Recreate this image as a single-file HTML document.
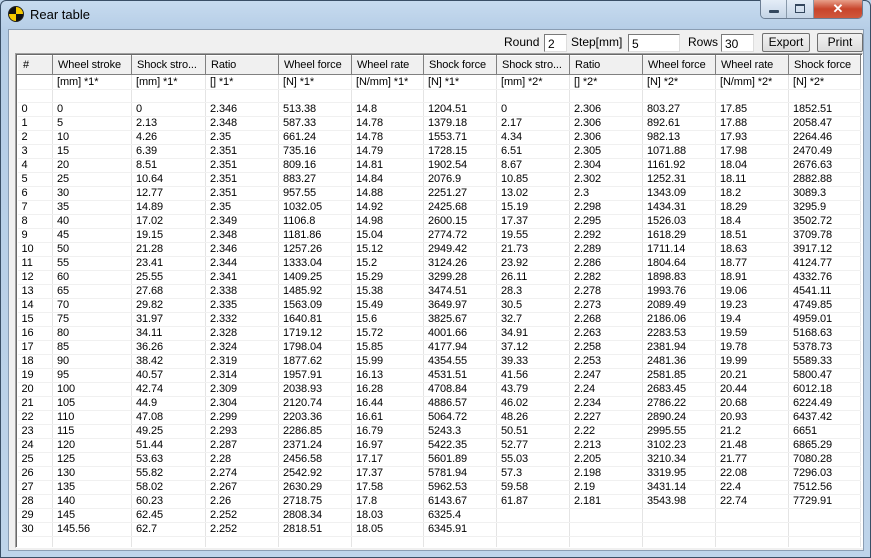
<!DOCTYPE html>
<html><head><meta charset="utf-8"><style>
*{margin:0;padding:0;box-sizing:border-box}
body{width:871px;height:558px;overflow:hidden;position:relative;font-family:"Liberation Sans",sans-serif;font-size:11px;color:#000;background:#bcd3ea}
.frame{position:absolute;left:0;top:0;width:871px;height:558px;border:1px solid #3a4f66;border-radius:6px 6px 0 0;background:linear-gradient(#c7dbef,#b5cde6 30px,#bed4ea)}
.title{position:absolute;left:30px;top:7px;font-size:13px;color:#000}
.icon{position:absolute;left:8px;top:6px;width:16px;height:16px;border-radius:50%;background:conic-gradient(#f5c800 0 90deg,#111 90deg 180deg,#f5c800 180deg 270deg,#111 270deg 360deg);border:1px solid #222}
.btns{position:absolute;left:760px;top:0;height:19px;width:103px;border:1px solid #6b7d93;border-top:none;border-radius:0 0 5px 5px;overflow:hidden;display:flex}
.btns div{height:18px;background:linear-gradient(#e4edf7,#c4d4e6);border-right:1px solid #8899aa;position:relative}
.b1{width:26px}.b2{width:27px}.b3{flex:1;background:linear-gradient(#e8a08a,#c8452b 50%,#d0583c)!important;border:none!important;color:#fff;text-align:center;font-weight:bold;font-size:13px;line-height:17px}
.b1 i{position:absolute;left:8px;top:10px;width:10px;height:3px;background:#33475e;border-radius:1px}
.b2 i{position:absolute;left:8px;top:4px;width:10px;height:9px;border:1px solid #33475e;border-top-width:2px}
.client{position:absolute;left:8px;top:29px;width:856px;height:522px;background:#f0f0f0;border:1px solid #8a9db3}
.lbl{position:absolute;top:35px;font-size:12px}
.inp{position:absolute;top:34px;height:18px;background:#fff;border:1px solid #7a7a7a;border-right-color:#ddd;border-bottom-color:#ddd;font-size:12px;padding:2px 0 0 3px}
.btn{position:absolute;top:33px;height:19px;background:linear-gradient(#f2f2f2,#dcdcdc);border:1px solid #707070;border-radius:2px;font-size:12px;text-align:center;line-height:17px}
.tw{position:absolute;left:15px;top:53px;width:848px;height:495px;border:1px solid #a0a0a0;border-right-color:#fff;border-bottom-color:#fff;background:#fff;overflow:hidden}
.tw2{position:absolute;left:16px;top:54px;width:846px;height:493px;border:1px solid #696969;border-right:none;border-bottom:none;overflow:hidden;background:#fff}
table{border-collapse:collapse;table-layout:fixed;position:absolute;left:0;top:0}
td{height:14px;padding:0 0 0 4px;white-space:nowrap;overflow:hidden;border-right:1px solid #e4e4e4;border-bottom:1px solid #f0f0f0;line-height:13px;font-size:11px;letter-spacing:-0.1px}
tr.h td{height:19px;background:#f0f0f0;border:1px solid #a0a0a0;border-top:1px solid #fff;border-left:1px solid #fff;border-right:1px solid #808080;border-bottom:1px solid #808080;padding-left:5px}
tr.u td{height:15px}
tr.b td{height:13px}
</style></head><body>
<div class="frame"></div>
<div class="icon"></div>
<div class="title">Rear table</div>
<div class="btns"><div class="b1"><i></i></div><div class="b2"><i></i></div><div class="b3">✕</div></div>
<div class="client"></div>
<div class="lbl" style="left:504px">Round</div>
<div class="inp" style="left:544px;width:23px">2</div>
<div class="lbl" style="left:571px">Step[mm]</div>
<div class="inp" style="left:628px;width:52px">5</div>
<div class="lbl" style="left:688px">Rows</div>
<div class="inp" style="left:721px;width:33px">30</div>
<div class="btn" style="left:762px;width:48px">Export</div>
<div class="btn" style="left:817px;width:46px">Print</div>
<div class="tw"></div>
<div class="tw2">
<table>
<colgroup><col style="width:35px"><col style="width:79px"><col style="width:74px"><col style="width:73px"><col style="width:73px"><col style="width:72px"><col style="width:73px"><col style="width:73px"><col style="width:73px"><col style="width:73px"><col style="width:73px"><col style="width:72px"></colgroup>
<tr class="h"><td>#</td><td>Wheel stroke</td><td>Shock stro...</td><td>Ratio</td><td>Wheel force</td><td>Wheel rate</td><td>Shock force</td><td>Shock stro...</td><td>Ratio</td><td>Wheel force</td><td>Wheel rate</td><td>Shock force</td></tr>
<tr class="u"><td></td><td>[mm] *1*</td><td>[mm] *1*</td><td>[] *1*</td><td>[N] *1*</td><td>[N/mm] *1*</td><td>[N] *1*</td><td>[mm] *2*</td><td>[] *2*</td><td>[N] *2*</td><td>[N/mm] *2*</td><td>[N] *2*</td></tr>
<tr class="b"><td></td><td></td><td></td><td></td><td></td><td></td><td></td><td></td><td></td><td></td><td></td><td></td></tr>
<tr><td>0</td><td>0</td><td>0</td><td>2.346</td><td>513.38</td><td>14.8</td><td>1204.51</td><td>0</td><td>2.306</td><td>803.27</td><td>17.85</td><td>1852.51</td></tr>
<tr><td>1</td><td>5</td><td>2.13</td><td>2.348</td><td>587.33</td><td>14.78</td><td>1379.18</td><td>2.17</td><td>2.306</td><td>892.61</td><td>17.88</td><td>2058.47</td></tr>
<tr><td>2</td><td>10</td><td>4.26</td><td>2.35</td><td>661.24</td><td>14.78</td><td>1553.71</td><td>4.34</td><td>2.306</td><td>982.13</td><td>17.93</td><td>2264.46</td></tr>
<tr><td>3</td><td>15</td><td>6.39</td><td>2.351</td><td>735.16</td><td>14.79</td><td>1728.15</td><td>6.51</td><td>2.305</td><td>1071.88</td><td>17.98</td><td>2470.49</td></tr>
<tr><td>4</td><td>20</td><td>8.51</td><td>2.351</td><td>809.16</td><td>14.81</td><td>1902.54</td><td>8.67</td><td>2.304</td><td>1161.92</td><td>18.04</td><td>2676.63</td></tr>
<tr><td>5</td><td>25</td><td>10.64</td><td>2.351</td><td>883.27</td><td>14.84</td><td>2076.9</td><td>10.85</td><td>2.302</td><td>1252.31</td><td>18.11</td><td>2882.88</td></tr>
<tr><td>6</td><td>30</td><td>12.77</td><td>2.351</td><td>957.55</td><td>14.88</td><td>2251.27</td><td>13.02</td><td>2.3</td><td>1343.09</td><td>18.2</td><td>3089.3</td></tr>
<tr><td>7</td><td>35</td><td>14.89</td><td>2.35</td><td>1032.05</td><td>14.92</td><td>2425.68</td><td>15.19</td><td>2.298</td><td>1434.31</td><td>18.29</td><td>3295.9</td></tr>
<tr><td>8</td><td>40</td><td>17.02</td><td>2.349</td><td>1106.8</td><td>14.98</td><td>2600.15</td><td>17.37</td><td>2.295</td><td>1526.03</td><td>18.4</td><td>3502.72</td></tr>
<tr><td>9</td><td>45</td><td>19.15</td><td>2.348</td><td>1181.86</td><td>15.04</td><td>2774.72</td><td>19.55</td><td>2.292</td><td>1618.29</td><td>18.51</td><td>3709.78</td></tr>
<tr><td>10</td><td>50</td><td>21.28</td><td>2.346</td><td>1257.26</td><td>15.12</td><td>2949.42</td><td>21.73</td><td>2.289</td><td>1711.14</td><td>18.63</td><td>3917.12</td></tr>
<tr><td>11</td><td>55</td><td>23.41</td><td>2.344</td><td>1333.04</td><td>15.2</td><td>3124.26</td><td>23.92</td><td>2.286</td><td>1804.64</td><td>18.77</td><td>4124.77</td></tr>
<tr><td>12</td><td>60</td><td>25.55</td><td>2.341</td><td>1409.25</td><td>15.29</td><td>3299.28</td><td>26.11</td><td>2.282</td><td>1898.83</td><td>18.91</td><td>4332.76</td></tr>
<tr><td>13</td><td>65</td><td>27.68</td><td>2.338</td><td>1485.92</td><td>15.38</td><td>3474.51</td><td>28.3</td><td>2.278</td><td>1993.76</td><td>19.06</td><td>4541.11</td></tr>
<tr><td>14</td><td>70</td><td>29.82</td><td>2.335</td><td>1563.09</td><td>15.49</td><td>3649.97</td><td>30.5</td><td>2.273</td><td>2089.49</td><td>19.23</td><td>4749.85</td></tr>
<tr><td>15</td><td>75</td><td>31.97</td><td>2.332</td><td>1640.81</td><td>15.6</td><td>3825.67</td><td>32.7</td><td>2.268</td><td>2186.06</td><td>19.4</td><td>4959.01</td></tr>
<tr><td>16</td><td>80</td><td>34.11</td><td>2.328</td><td>1719.12</td><td>15.72</td><td>4001.66</td><td>34.91</td><td>2.263</td><td>2283.53</td><td>19.59</td><td>5168.63</td></tr>
<tr><td>17</td><td>85</td><td>36.26</td><td>2.324</td><td>1798.04</td><td>15.85</td><td>4177.94</td><td>37.12</td><td>2.258</td><td>2381.94</td><td>19.78</td><td>5378.73</td></tr>
<tr><td>18</td><td>90</td><td>38.42</td><td>2.319</td><td>1877.62</td><td>15.99</td><td>4354.55</td><td>39.33</td><td>2.253</td><td>2481.36</td><td>19.99</td><td>5589.33</td></tr>
<tr><td>19</td><td>95</td><td>40.57</td><td>2.314</td><td>1957.91</td><td>16.13</td><td>4531.51</td><td>41.56</td><td>2.247</td><td>2581.85</td><td>20.21</td><td>5800.47</td></tr>
<tr><td>20</td><td>100</td><td>42.74</td><td>2.309</td><td>2038.93</td><td>16.28</td><td>4708.84</td><td>43.79</td><td>2.24</td><td>2683.45</td><td>20.44</td><td>6012.18</td></tr>
<tr><td>21</td><td>105</td><td>44.9</td><td>2.304</td><td>2120.74</td><td>16.44</td><td>4886.57</td><td>46.02</td><td>2.234</td><td>2786.22</td><td>20.68</td><td>6224.49</td></tr>
<tr><td>22</td><td>110</td><td>47.08</td><td>2.299</td><td>2203.36</td><td>16.61</td><td>5064.72</td><td>48.26</td><td>2.227</td><td>2890.24</td><td>20.93</td><td>6437.42</td></tr>
<tr><td>23</td><td>115</td><td>49.25</td><td>2.293</td><td>2286.85</td><td>16.79</td><td>5243.3</td><td>50.51</td><td>2.22</td><td>2995.55</td><td>21.2</td><td>6651</td></tr>
<tr><td>24</td><td>120</td><td>51.44</td><td>2.287</td><td>2371.24</td><td>16.97</td><td>5422.35</td><td>52.77</td><td>2.213</td><td>3102.23</td><td>21.48</td><td>6865.29</td></tr>
<tr><td>25</td><td>125</td><td>53.63</td><td>2.28</td><td>2456.58</td><td>17.17</td><td>5601.89</td><td>55.03</td><td>2.205</td><td>3210.34</td><td>21.77</td><td>7080.28</td></tr>
<tr><td>26</td><td>130</td><td>55.82</td><td>2.274</td><td>2542.92</td><td>17.37</td><td>5781.94</td><td>57.3</td><td>2.198</td><td>3319.95</td><td>22.08</td><td>7296.03</td></tr>
<tr><td>27</td><td>135</td><td>58.02</td><td>2.267</td><td>2630.29</td><td>17.58</td><td>5962.53</td><td>59.58</td><td>2.19</td><td>3431.14</td><td>22.4</td><td>7512.56</td></tr>
<tr><td>28</td><td>140</td><td>60.23</td><td>2.26</td><td>2718.75</td><td>17.8</td><td>6143.67</td><td>61.87</td><td>2.181</td><td>3543.98</td><td>22.74</td><td>7729.91</td></tr>
<tr><td>29</td><td>145</td><td>62.45</td><td>2.252</td><td>2808.34</td><td>18.03</td><td>6325.4</td><td></td><td></td><td></td><td></td><td></td></tr>
<tr><td>30</td><td>145.56</td><td>62.7</td><td>2.252</td><td>2818.51</td><td>18.05</td><td>6345.91</td><td></td><td></td><td></td><td></td><td></td></tr>
<tr><td></td><td></td><td></td><td></td><td></td><td></td><td></td><td></td><td></td><td></td><td></td><td></td></tr>
<tr><td></td><td></td><td></td><td></td><td></td><td></td><td></td><td></td><td></td><td></td><td></td><td></td></tr>
</table>
</div>
</body></html>
